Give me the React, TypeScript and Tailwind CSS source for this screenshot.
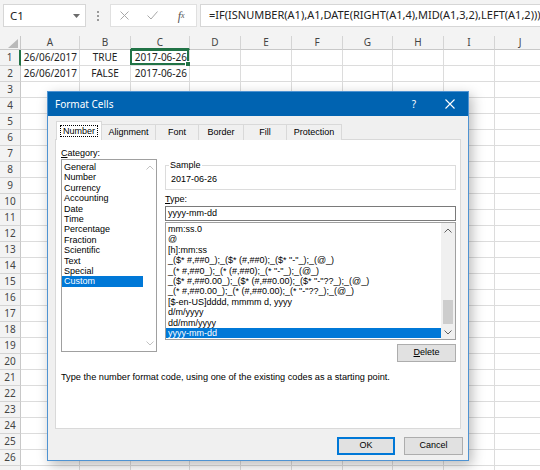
import React from 'react';

const LETTERS = ['A', 'B', 'C', 'D', 'E', 'F', 'G', 'H', 'I', 'J'];
const ROWS = Array.from({ length: 27 }, (_, i) => i + 1);

type CellValue = { text: string; align: string };

const CELLS: Record<string, CellValue> = {
  A1: { text: '26/06/2017', align: 'justify-end' },
  B1: { text: 'TRUE', align: 'justify-center' },
  C1: { text: '2017-06-26', align: 'justify-end' },
  A2: { text: '26/06/2017', align: 'justify-end' },
  B2: { text: 'FALSE', align: 'justify-center' },
  C2: { text: '2017-06-26', align: 'justify-end' },
};

const CATEGORIES = [
  'General', 'Number', 'Currency', 'Accounting', 'Date', 'Time',
  'Percentage', 'Fraction', 'Scientific', 'Text', 'Special', 'Custom',
];

const FORMATS = [
  'mm:ss.0',
  '@',
  '[h]:mm:ss',
  '_($* #,##0_);_($* (#,##0);_($* "-"_);_(@_)',
  '_(* #,##0_);_(* (#,##0);_(* "-"_);_(@_)',
  '_($* #,##0.00_);_($* (#,##0.00);_($* "-"??_);_(@_)',
  '_(* #,##0.00_);_(* (#,##0.00);_(* "-"??_);_(@_)',
  '[$-en-US]dddd, mmmm d, yyyy',
  'd/m/yyyy',
  'dd/mm/yyyy',
  'yyyy-mm-dd',
];

const TABS = [
  { label: 'Alignment', w: 'w-[55px]' },
  { label: 'Font', w: 'w-[44px]' },
  { label: 'Border', w: 'w-[46px]' },
  { label: 'Fill', w: 'w-[44px]' },
  { label: 'Protection', w: 'w-[56px]' },
];

const Chevron = ({ up, color }: { up?: boolean; color: string }) => (
  <svg width="8" height="5" viewBox="0 0 8 5">
    <polyline
      points={up ? '0.5,4.5 4,1 7.5,4.5' : '0.5,0.5 4,4 7.5,0.5'}
      fill="none"
      stroke={color}
      strokeWidth="1"
    />
  </svg>
);

const FormulaBar = () => (
  <div className="h-[36px] bg-[#f3f3f3] pt-[4px] pl-[3px] flex items-start">
    <div className="w-[83px] h-[23px] bg-white border border-[#d6d6d6] flex items-center justify-between pl-[6px] pr-[5px] text-[11.5px] text-[#222]">
      <span>C1</span>
      <svg width="7" height="4" viewBox="0 0 7 4">
        <polygon points="0,0 7,0 3.5,4" fill="#6b6b6b" />
      </svg>
    </div>
    <div className="w-[24px] h-[23px] flex flex-col items-center justify-center gap-[2px]">
      <span className="w-[2px] h-[2px] bg-[#9a9a9a]" />
      <span className="w-[2px] h-[2px] bg-[#9a9a9a]" />
      <span className="w-[2px] h-[2px] bg-[#9a9a9a]" />
    </div>
    <div className="w-[87px] h-[23px] bg-white border border-[#e0e0e0] flex items-center">
      <span className="w-[28px] flex justify-center">
        <svg width="9" height="9" viewBox="0 0 9 9">
          <path d="M0.5 0.5L8.5 8.5M8.5 0.5L0.5 8.5" stroke="#a8a8a8" strokeWidth="1" />
        </svg>
      </span>
      <span className="w-[28px] flex justify-center">
        <svg width="11" height="9" viewBox="0 0 11 9">
          <path d="M0.5 4.5L4 8L10.5 0.5" fill="none" stroke="#a8a8a8" strokeWidth="1" />
        </svg>
      </span>
      <span className="w-[30px] flex justify-center font-['Liberation_Serif',serif] italic text-[12px] text-[#555] leading-none">
        f<span className="text-[8px] translate-y-[2px]">x</span>
      </span>
    </div>
    <div className="ml-[3px] flex-1 h-[23px] bg-white border border-[#d6d6d6] border-r-0 flex items-center pl-[8px] text-[11px] text-[#222] whitespace-nowrap overflow-hidden">
      =IF(ISNUMBER(A1),A1,DATE(RIGHT(A1,4),MID(A1,3,2),LEFT(A1,2)))
    </div>
  </div>
);

const Sheet = () => (
  <div className="grid grid-cols-[21px_59px_51px_59px_51px_51px_51px_50px_51px_51px_51px] text-[10px] text-[#222]">
    <div className="h-[14px] bg-[#f3f3f3] border-r border-b border-[#c8c8c8] flex items-end justify-end pr-[2px] pb-[1px]">
      <svg width="10" height="9" viewBox="0 0 10 9">
        <polygon points="10,0 10,9 0,9" fill="#b9b9b9" />
      </svg>
    </div>
    {LETTERS.map((l) => (
      <div
        key={l}
        className={`h-[14px] bg-[#f3f3f3] border-r border-[#d4d4d4] flex items-center justify-center text-[10px] text-[#444] ${
          l === 'C' ? 'border-b-2 border-b-[#217346]' : 'border-b border-b-[#c8c8c8]'
        }`}
      >
        {l}
      </div>
    ))}
    {ROWS.map((r) => (
      <React.Fragment key={r}>
        <div
          className={`h-[16px] bg-[#f3f3f3] border-b border-[#d4d4d4] flex items-center justify-center text-[10px] text-[#444] ${
            r === 1 ? 'border-r-2 border-r-[#217346]' : 'border-r border-r-[#c8c8c8]'
          }`}
        >
          {r < 27 ? r : ''}
        </div>
        {LETTERS.map((l) => {
          const cell = CELLS[`${l}${r}`];
          const active = l === 'C' && r === 1;
          return (
            <div
              key={l}
              className={`relative h-[16px] border-r border-b border-[#dcdcdc] flex items-center px-[2px] whitespace-nowrap ${
                cell ? cell.align : ''
              }`}
            >
              {cell?.text}
              {active && (
                <div className="absolute -left-px -top-px -right-0 -bottom-0 border-2 border-[#217346]">
                  <span className="absolute -right-[4px] -bottom-[4px] w-[6px] h-[6px] bg-[#217346] border border-white" />
                </div>
              )}
            </div>
          );
        })}
      </React.Fragment>
    ))}
  </div>
);

const Button = ({ children, primary }: { children: React.ReactNode; primary?: boolean }) => (
  <button
    className={`h-[18px] flex items-center justify-center bg-[#e1e1e1] text-[9px] text-black ${
      primary
        ? 'w-[58px] border border-[#0078d7] shadow-[inset_0_0_0_1px_#0078d7]'
        : 'w-[59px] border border-[#adadad]'
    }`}
  >
    {children}
  </button>
);

const FormatCellsDialog = () => (
  <div className="absolute left-[47px] top-[91px] w-[422px] h-[370px] border border-[#4f93d2] bg-[#f0f0f0] flex flex-col shadow-[3px_4px_12px_rgba(0,0,0,0.28)] text-[9px] text-black font-['Liberation_Sans',sans-serif]">
    <div className="h-[24px] bg-[#0063b1] flex items-center text-white shrink-0 font-['Noto_Sans',sans-serif]">
      <span className="pl-[7px] flex-1 text-[10px]">Format Cells</span>
      <span className="w-[36px] text-center text-[10px]">?</span>
      <span className="w-[36px] flex justify-center">
        <svg width="10" height="10" viewBox="0 0 10 10">
          <path d="M0.5 0.5L9.5 9.5M9.5 0.5L0.5 9.5" stroke="white" strokeWidth="1.1" />
        </svg>
      </span>
    </div>

    <div className="pt-[5px] flex flex-col">
      <div className="relative z-10 -mb-px ml-[8px] flex items-end h-[19px]">
        <div className="w-[46px] h-[19px] bg-white border border-b-0 border-[#d9d9d9] flex items-center justify-center">
          <span className="border border-dotted border-black px-[2px] leading-[10px]">Number</span>
        </div>
        {TABS.map((t) => (
          <div
            key={t.label}
            className={`${t.w} -ml-px h-[16px] bg-[#f0f0f0] border border-b-0 border-[#d9d9d9] flex items-center justify-center`}
          >
            {t.label}
          </div>
        ))}
      </div>

      <div className="ml-[7px] w-[406px] h-[290px] bg-white border border-[#d9d9d9] pt-[8px] pl-[5px] flex flex-col">
        <div className="flex gap-[8px]">
          <div className="w-[96px] flex flex-col">
            <div className="leading-[11px]">
              <span className="underline">C</span>ategory:
            </div>
            <div className="h-[193px] border border-[#a0a0a0] flex">
              <div className="flex-1 pt-[2px]">
                {CATEGORIES.map((c) => (
                  <div
                    key={c}
                    className={`h-[10.4px] leading-[10.4px] pl-[2px] ${
                      c === 'Custom' ? 'bg-[#0078d7] text-white' : ''
                    }`}
                  >
                    {c}
                  </div>
                ))}
              </div>
              <div className="w-[13px] flex flex-col justify-between items-center py-[5px]">
                <Chevron up color="#c2c2c2" />
                <Chevron color="#c2c2c2" />
              </div>
            </div>
          </div>

          <div className="w-[291px] pt-[12px] flex flex-col">
            <fieldset className="border border-[#dcdcdc] h-[30px]">
              <legend className="ml-[3px] px-[1px] leading-[10px]">Sample</legend>
              <div className="mt-[4px] pl-[5px] leading-[10px]">2017-06-26</div>
            </fieldset>
            <div className="mt-[4px] leading-[10px]">
              <span className="underline">T</span>ype:
            </div>
            <div className="mt-[2px] h-[15px] border border-[#7a7a7a] flex items-center pl-[2px]">yyyy-mm-dd</div>
            <div className="mt-[1px] h-[118px] border border-[#a0a0a0] flex overflow-hidden">
              <div className="flex-1 pt-[1px] overflow-hidden">
                {FORMATS.map((f) => (
                  <div
                    key={f}
                    className={`h-[10.4px] leading-[10.4px] pl-[2px] whitespace-pre ${
                      f === 'yyyy-mm-dd' ? 'bg-[#0078d7] text-white' : ''
                    }`}
                  >
                    {f}
                  </div>
                ))}
              </div>
              <div className="w-[14px] bg-[#f0f0f0] flex flex-col">
                <div className="h-[14px] flex items-center justify-center">
                  <Chevron up color="#606060" />
                </div>
                <div className="flex-1 flex flex-col justify-end items-center">
                  <div className="w-[10px] h-[24px] bg-[#cdcdcd] mb-px" />
                </div>
                <div className="h-[14px] flex items-center justify-center">
                  <Chevron color="#606060" />
                </div>
              </div>
            </div>
            <div className="mt-[4px] flex justify-end">
              <Button>
                <span className="underline">D</span>elete
              </Button>
            </div>
          </div>
        </div>
        <div className="mt-[10px] leading-[10px] text-[9.2px]">
          Type the number format code, using one of the existing codes as a starting point.
        </div>
      </div>

      <div className="mt-[8px] pr-[5px] flex justify-end gap-[9px]">
        <Button primary>OK</Button>
        <Button>Cancel</Button>
      </div>
    </div>
  </div>
);

export default function App() {
  return (
    <div className="relative w-[540px] h-[470px] overflow-hidden bg-white font-['Noto_Sans',sans-serif]">
      <FormulaBar />
      <Sheet />
      <FormatCellsDialog />
    </div>
  );
}
